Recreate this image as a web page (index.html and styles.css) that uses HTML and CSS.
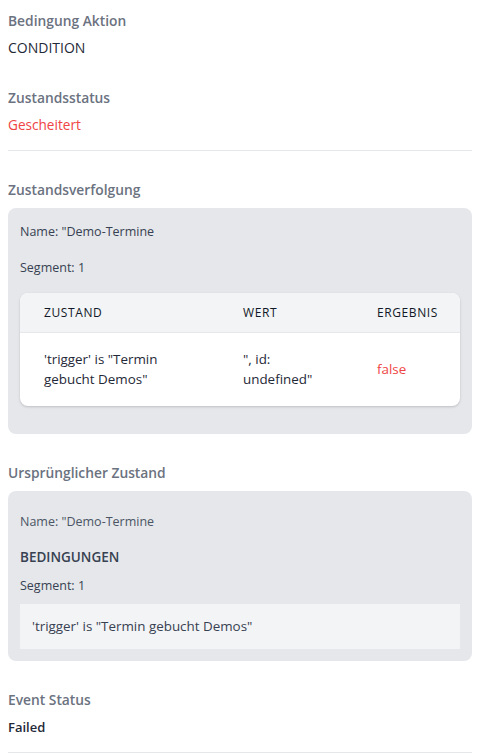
FILE: index.html
```html
<!DOCTYPE html>
<html lang="de">
<head>
<meta charset="utf-8">
<link rel="stylesheet" href="styles.css">
</head>
<body>
<div class="page">
  <section class="field">
    <div class="label">Bedingung Aktion</div>
    <div class="value">CONDITION</div>
  </section>
  <section class="field field-gap">
    <div class="label">Zustandsstatus</div>
    <div class="value value-red">Gescheitert</div>
  </section>
  <hr class="divider">

  <section class="block block-first">
    <div class="label">Zustandsverfolgung</div>
    <div class="card card-trace">
      <p class="card-text">Name: "Demo-Termine</p>
      <p class="card-text card-text-gap">Segment: 1</p>
      <div class="table-wrap">
        <table class="table">
          <colgroup>
            <col class="col-1"><col class="col-2"><col class="col-3">
          </colgroup>
          <thead>
            <tr><th>Zustand</th><th>Wert</th><th>Ergebnis</th></tr>
          </thead>
          <tbody>
            <tr>
              <td>'trigger' is "Termin gebucht Demos"</td>
              <td>", id: undefined"</td>
              <td class="result-false">false</td>
            </tr>
          </tbody>
        </table>
      </div>
    </div>
  </section>

  <section class="block">
    <div class="label">Ursprünglicher Zustand</div>
    <div class="card card-orig">
      <p class="card-text card-muted">Name: "Demo-Termine</p>
      <p class="card-heading">BEDINGUNGEN</p>
      <p class="card-text">Segment: 1</p>
      <div class="cond-box">'trigger' is "Termin gebucht Demos"</div>
    </div>
  </section>

  <section class="field field-event">
    <div class="label">Event Status</div>
    <div class="value value-strong">Failed</div>
  </section>
  <hr class="divider divider-bottom">
</div>
</body>
</html>
```

FILE: styles.css
```css
* { box-sizing: border-box; }
html, body { margin: 0; padding: 0; background: #ffffff; }
body {
  font-family: "Open Sans", "Noto Sans", "Liberation Sans", sans-serif;
  font-size: 13px;
  line-height: 20px;
  color: #1f2937;
}
.page {
  width: 464px;
  margin-left: 8px;
  padding-top: 11px;
}
.label {
  font-weight: 600;
  color: #6b7280;
  font-size: 13.8px;
  line-height: 20px;
}
.value {
  margin-top: 7px;
  font-weight: 500;
  font-size: 14px;
  color: #1f2937;
}
.value-red { color: #ef4444; font-weight: 400; font-size: 13.6px; }
.value-strong { font-weight: 600; color: #1f2937; font-size: 13px; }
.field-gap { margin-top: 30px; }
.divider {
  border: 0;
  height: 1px;
  background: #e5e7eb;
  margin: 15px 0 0 0;
}
.block-first { margin-top: 29px; }
.block + .block { margin-top: 29px; }
.card {
  margin-top: 8px;
  background: #e5e7eb;
  border-radius: 8px;
  padding: 12px;
}
.card-trace { padding-top: 14px; padding-bottom: 28px; }
.card-orig { padding-top: 21px; padding-bottom: 12px; }
.card-text {
  margin: 0;
  color: #374151;
  font-size: 12.5px;
}
.card-muted { color: #4b5563; }
.card-text-gap { margin-top: 16px; }
.card-heading {
  margin: 15px 0 0 0;
  font-weight: 600;
  color: #374151;
  font-size: 13.5px;
}
.card-heading + .card-text { margin-top: 9px; }
.table-wrap {
  margin-top: 15px;
  background: #ffffff;
  border-radius: 8px;
  overflow: hidden;
  box-shadow: 0 1px 3px rgba(0,0,0,0.12), 0 1px 2px rgba(0,0,0,0.06);
}
.table {
  width: 100%;
  border-collapse: collapse;
  table-layout: fixed;
}
.col-1 { width: 199px; }
.col-2 { width: 134px; }
.col-3 { width: 107px; }
.table th {
  background: #f3f4f6;
  text-align: left;
  font-size: 12px;
  font-weight: 500;
  letter-spacing: 0.05em;
  text-transform: uppercase;
  color: #111827;
  padding: 10px 0 9px 24px;
  line-height: 20px;
  border-bottom: 1px solid #e5e7eb;
}
.table td {
  padding: 16px 16px 17px 24px;
  vertical-align: middle;
  color: #1f2937;
  font-size: 13.4px;
  line-height: 20px;
}
.table td.result-false { color: #ef4444; }
.cond-box {
  margin-top: 8px;
  background: #f3f4f6;
  padding: 12px 12px 13px 12px;
  color: #374151;
  font-size: 13.4px;
}
.field-event { margin-top: 29px; }
.divider-bottom { margin-top: 15px; }
```
